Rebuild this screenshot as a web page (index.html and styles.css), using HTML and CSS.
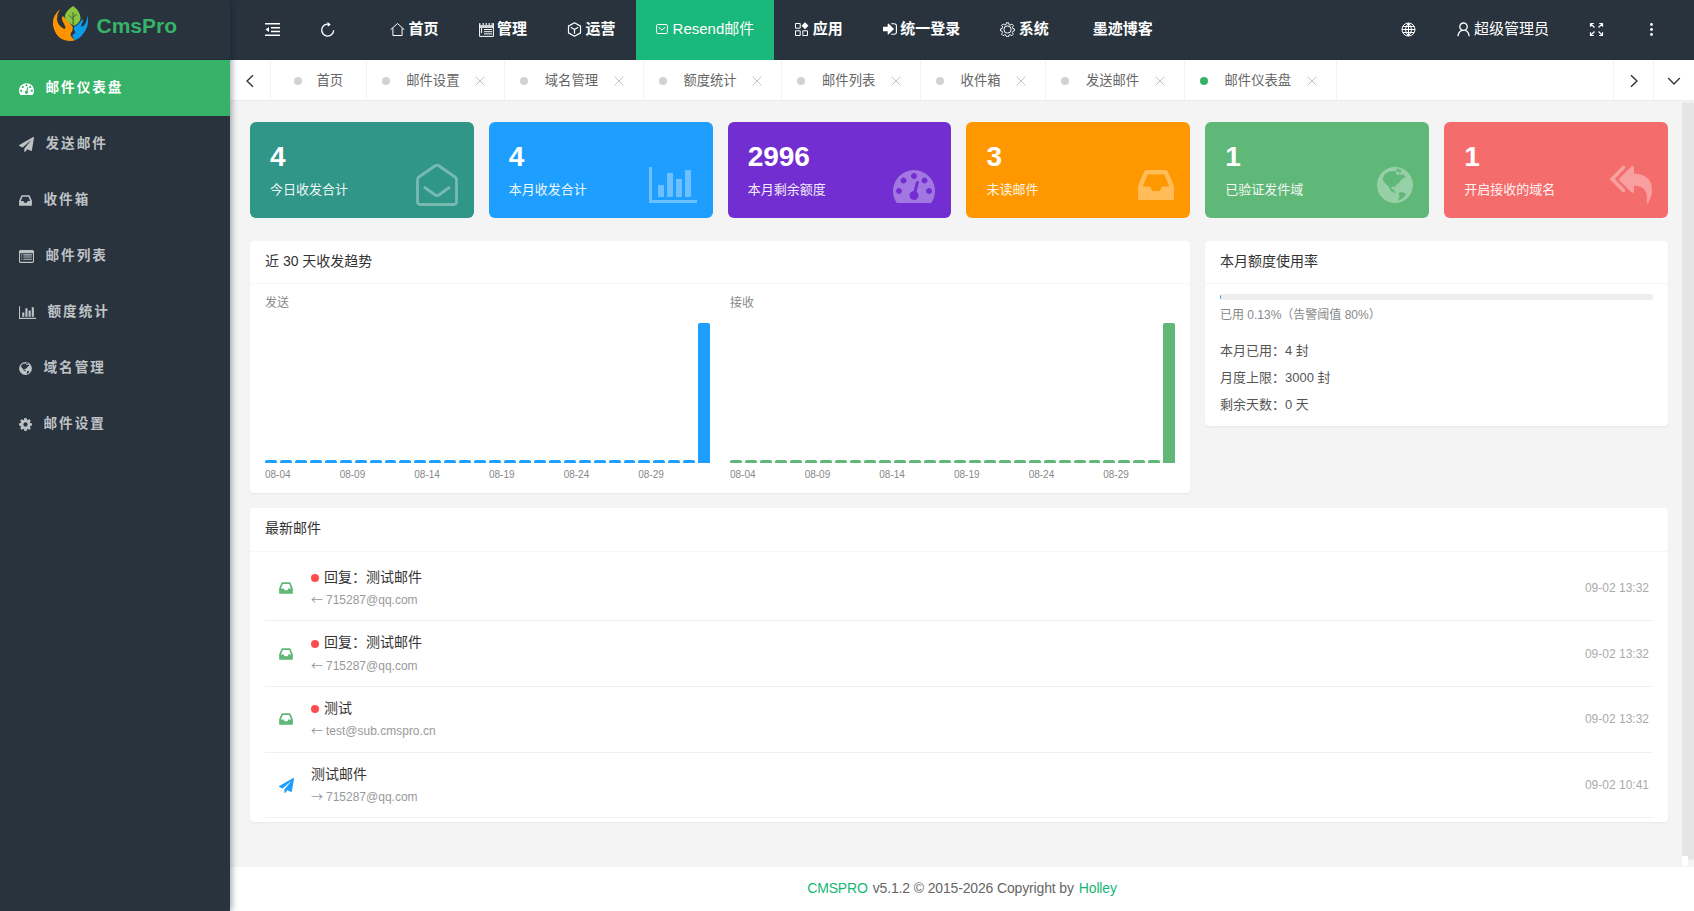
FILE: index.html
```html
<!DOCTYPE html>
<html lang="zh-CN">

<head>
    <meta charset="UTF-8">
    <meta name="viewport" content="width=device-width, initial-scale=1.0">
    <title>邮件仪表盘 - CmsPro</title>
    <link rel="stylesheet" href="styles.css">
</head>

<body>
    <!-- 图标 -->
    <svg class="sprite" xmlns="http://www.w3.org/2000/svg">
        <symbol id="i-gauge" viewBox="0 0 1792 1792"><path d="M384 1152q0-53-37.5-90.5t-90.5-37.5-90.5 37.5-37.5 90.5 37.5 90.5 90.5 37.5 90.5-37.5 37.5-90.5zm192-448q0-53-37.5-90.5t-90.5-37.5-90.5 37.5-37.5 90.5 37.5 90.5 90.5 37.5 90.5-37.5 37.5-90.5zm428 481l101-382q6-26-7.5-48.5t-38.5-29.5-48 6.5-30 39.5l-101 382q-60 5-107 43.5t-63 98.5q-20 77 20 146t117 89 146-20 89-117q16-60-6-117t-72-91zm660-33q0-53-37.5-90.5t-90.5-37.5-90.5 37.5-37.5 90.5 37.5 90.5 90.5 37.5 90.5-37.5 37.5-90.5zm-640-640q0-53-37.5-90.5t-90.5-37.5-90.5 37.5-37.5 90.5 37.5 90.5 90.5 37.5 90.5-37.5 37.5-90.5zm448 192q0-53-37.5-90.5t-90.5-37.5-90.5 37.5-37.5 90.5 37.5 90.5 90.5 37.5 90.5-37.5 37.5-90.5zm320 448q0 261-141 483-19 29-54 29h-1402q-35 0-54-29-141-221-141-483 0-182 71-348t191-286 286-191 348-71 348 71 286 191 191 286 71 348z"/></symbol>
        <symbol id="i-plane" viewBox="0 0 1792 1792"><path d="M1764 11q33 24 27 64l-256 1536q-5 29-32 45-14 8-31 8-11 0-24-5l-453-185-242 295q-18 23-49 23-13 0-22-4-19-7-30.5-23.5t-11.5-36.5v-349l864-1059-1069 925-395-162q-37-14-40-55-2-40 32-59l1664-960q15-9 32-9 20 0 36 11z"/></symbol>
        <symbol id="i-inbox" viewBox="128 0 1536 1792"><path d="M1151 960h316q-1-3-2.5-8.5t-2.5-7.5l-212-496h-708l-212 496q-1 3-2.5 8.5t-2.5 7.5h316l95 192h320zm513 30v482q0 26-19 45t-45 19h-1408q-26 0-45-19t-19-45v-482q0-62 25-123l238-552q10-25 36.5-42t52.5-17h832q26 0 52.5 17t36.5 42l238 552q25 61 25 123z"/></symbol>
        <symbol id="i-list" viewBox="0 0 1792 1792"><path fill-rule="evenodd" d="M160 128h1472q66 0 113 47t47 113v1216q0 66-47 113t-113 47h-1472q-66 0-113-47t-47-113v-1216q0-66 47-113t113-47zM128 512v992q0 32 32 32h1472q32 0 32-32v-992zM256 640h128v128h-128zM512 640h1024v128h-1024zM256 896h128v128h-128zM512 896h1024v128h-1024zM256 1152h128v128h-128zM512 1152h1024v128h-1024z"/></symbol>
        <symbol id="i-chart" viewBox="0 0 2048 1792"><path d="M640 896v512h-256v-512h256zm384-512v1024h-256v-1024h256zm1024 1152v128h-2048v-1536h128v1408h1920zm-640-896v768h-256v-768h256zm384-384v1152h-256v-1152h256z"/></symbol>
        <symbol id="i-earth" viewBox="0 0 36 42"><path fill-rule="evenodd" d="M18 3a18 18 0 1 0 0 36a18 18 0 1 0 0-36zM5.800 14l2-4 4.500-2.500 6-.5 1.500 1.300-1 1.700 2.500 1.500 1.500-2.500 1 2.500 2-1.500 3 3.300-3 1-2 2-1.500 2.500-3.500 2.200-.8 2.300-1.500-1-2.500 1.200 1 2 2-.5.500 2.500 2 1.500-2.500-.3-3.500-2.200-2-4-3-3-2.500-3zM19.500 4.500l5.500 2-1.500 2.200-4-1.700zM21.500 29l3-1 4.500 1.500-1.500 3-4.500 3.500-2 .5 1.500-4z"/></symbol>
        <symbol id="i-cog" viewBox="128 0 1536 1792"><path d="M1152 896q0-106-75-181t-181-75-181 75-75 181 75 181 181 75 181-75 75-181zm512-109v222q0 12-8 23t-20 13l-185 28q-19 54-39 91 35 50 107 138 10 12 10 25t-9 23q-27 37-99 108t-94 71q-12 0-26-9l-138-108q-44 23-91 38-16 136-29 186-7 28-36 28h-222q-14 0-24.500-8.500t-11.500-21.500l-28-184q-49-16-90-37l-141 107q-10 9-25 9-14 0-25-11-126-114-165-168-7-10-7-23 0-12 8-23 15-21 51-66.500t54-70.500q-27-50-41-99l-183-27q-13-2-21-12.500t-8-23.500v-222q0-12 8-23t19-13l186-28q14-46 39-92-40-57-107-138-10-12-10-24 0-10 9-23 26-36 98.500-107.500t94.500-71.500q13 0 26 10l138 107q44-23 91-38 16-136 29-186 7-28 36-28h222q14 0 24.500 8.500t11.500 21.500l28 184q49 16 90 37l142-107q9-9 24-9 13 0 25 10 129 119 165 170 7 8 7 22 0 12-8 23-15 21-51 66.500t-54 70.500q26 50 41 98l183 28q13 2 21 12.500t8 23.500z"/></symbol>
        <symbol id="i-reply" viewBox="0 0 1792 1792"><path d="M640 1082v70q0 42-39 59-13 5-25 5-27 0-45-19l-512-512q-19-19-19-45t19-45l512-512q29-31 70-14 39 17 39 59v69l-397 398q-19 19-19 45t19 45zm1152 58q0 58-17 133.500t-38.500 138-48 125-40.500 90.500l-20 40q-8 17-28 17-6 0-9-1-25-8-23-34 43-400-106-565-64-71-170.500-110.500t-267.500-52.500v251q0 42-39 59-13 5-25 5-27 0-45-19l-512-512q-19-19-19-45t19-45l512-512q29-31 70-14 39 17 39 59v262q411 28 599 221 169 173 169 509z"/></symbol>
        <symbol id="i-signin" viewBox="128 128 1536 1536"><path d="M1312 896q0 26-19 45l-544 544q-19 19-45 19t-45-19-19-45v-288h-448q-26 0-45-19t-19-45v-384q0-26 19-45t45-19h448v-288q0-26 19-45t45-19 45 19l544 544q19 19 19 45zm352-352v704q0 119-84.500 203.500t-203.500 84.500h-352v-128h352q66 0 113-47t47-113v-704q0-66-47-113t-113-47h-352v-128h352q119 0 203.500 84.500t84.500 203.500z"/></symbol>
        <symbol id="i-open" viewBox="0 0 42 42"><path class="line" stroke-width="2.800" d="M1.500 15.500v22.500a2.500 2.500 0 0 0 2.500 2.500h34a2.500 2.500 0 0 0 2.500-2.500v-22.500q0-1.500-1.500-2.500l-16.500-11.500q-1.500-1-3 0l-16.500 11.500q-1.500 1-1.500 2.500zM8 23l10.500 7.500q2.500 1.800 5 0l10.500-7.500"/></symbol>
        <symbol id="i-home" viewBox="0 0 15 15"><path class="line" d="M.7 7.700l6.800-6.200 6.800 6.200M2.900 6.200v7.300h9.200v-7.300"/></symbol>
        <symbol id="i-manage" viewBox="0 0 15 15"><path class="line" d="M.6 2.500v11.900h13.800v-11.900M.6 5.300h13.800M5 7.500h8M5 9.700h8M5 11.900h8M2.600 6v5"/><path d="M0 1h1.500v2h2v-2h1.500v2h1.500v-2h1.500v2h1.500v-2h1.500v2h1.500v-2h2.500v4h-15z" opacity=".75"/></symbol>
        <symbol id="i-cube" viewBox="0 0 15 15"><path class="line" stroke-width="1.200" d="M7.500.8l6 3.300v6.800l-6 3.300-6-3.300v-6.800zM3.800 5.300l3.700 2.100 3.700-2.100M7.500 7.400v4.300"/></symbol>
        <symbol id="i-mail" viewBox="0 0 12 12"><path class="line" d="M1.800 1.500h8.400q1.200 0 1.200 1.200v6.600q0 1.200-1.200 1.200h-8.400q-1.200 0-1.200-1.200v-6.600q0-1.200 1.200-1.200zM2.700 4.300l3.300 2.700 3.300-2.700"/></symbol>
        <symbol id="i-app" viewBox="0 0 15 15"><path class="line" d="M1.500 1.500h4.700v4.700h-4.700zM1.500 8.800h4.700v4.700h-4.700zM8.800 8.800h4.700v4.700h-4.700z"/><path d="M11 .3l3.500 3.500-3.500 3.500-3.500-3.500z"/></symbol>
        <symbol id="i-gear" viewBox="0 0 15 15"><circle class="line" cx="7.500" cy="7.500" r="3.600"/><path class="line" d="M6.400.8h2.200l.4 1.900 1.200.4 1.700-1 1.500 1.500-1 1.700.4 1.200 1.600.4v1.900l-1.600.5-.5 1.200 1 1.700-1.500 1.500-1.700-1-1.200.5-.4 1.600h-2l-.5-1.600-1.200-.5-1.700 1-1.500-1.500 1-1.700-.5-1.200-1.500-.5v-1.900l1.600-.5.500-1.200-1-1.700 1.500-1.500 1.600 1 1.300-.5z"/></symbol>
        <symbol id="i-shrink" viewBox="0 0 15 15"><path d="M0 1h15v1.600h-15zM6 5h9v1.500h-9zM6 8.700h9v1.500h-9zM0 12.400h15v1.600h-15zM4 4.900v5.200l-3.500-2.600z"/></symbol>
        <symbol id="i-refresh" viewBox="0 0 15 15"><path class="line" stroke-width="1.300" d="M9 2.200a6 6 0 1 0 4.700 6"/><path d="M7.400 0l3.400 2.400-3 2.300z"/></symbol>
        <symbol id="i-globe" viewBox="0 0 15 15"><path class="line" d="M7.500 1a6.500 6.500 0 1 0 0 13a6.500 6.500 0 1 0 0-13zM7.500 1q-6 6.500 0 13q6-6.500 0-13zM7.500 1v13M1 7.500h13M2 4.500h11M2 10.500h11"/></symbol>
        <symbol id="i-user" viewBox="0 0 13 15"><path class="line" stroke-width="1.300" d="M6.500 1a3.700 3.700 0 1 0 0 7.400a3.700 3.700 0 1 0 0-7.400zM1 14.300q.3-4.600 3.900-6M8.500 8.300q3.300 1.400 3.600 6"/></symbol>
        <symbol id="i-full" viewBox="0 0 15 15"><path class="line" stroke-width="1.200" d="M1.500 4.800v-3.300h3.300M1.500 1.500l4 4M10.200 1.500h3.300v3.300M13.500 1.500l-4 4M1.500 10.200v3.300h3.300M1.500 13.500l4-4M10.200 13.500h3.300v-3.300M13.500 13.500l-4-4"/></symbol>
        <symbol id="i-more" viewBox="0 0 15 15"><circle cx="7.500" cy="2.500" r="1.400"/><circle cx="7.500" cy="7.500" r="1.400"/><circle cx="7.500" cy="12.500" r="1.400"/></symbol>
        <symbol id="i-close" viewBox="0 0 10 10"><path class="line" d="M.7.700l8.600 8.600M9.300.700l-8.600 8.600"/></symbol>
        <symbol id="i-left" viewBox="0 0 14 14"><path class="line" stroke-width="1.400" d="M10 1.200l-6 5.800 6 5.800"/></symbol>
        <symbol id="i-right" viewBox="0 0 14 14"><path class="line" stroke-width="1.400" d="M4 1.200l6 5.800-6 5.800"/></symbol>
        <symbol id="i-down" viewBox="0 0 14 14"><path class="line" stroke-width="1.300" d="M1.200 4l5.800 6 5.800-6"/></symbol>
    </svg>

    <div class="side">
        <div class="logo">
            <svg viewBox="0 0 34 34">
                <path fill="#ff9200" d="M7 3Q-2 11 .3 20Q3.500 34 17 34Q20 34 21.500 33Q17.500 31 17 27Q20 24 19 20Q15.500 16 11 11Q8 8 9 14L12 20Q12.500 22.500 10.500 22Q5 19 4 14Q3.500 8 7 3z"/>
                <path fill="#0e9be8" d="M33.500 9Q35.500 19 30 26Q26 32 21.500 33Q18.500 31 19 28Q22 27 21.500 25Q19 22 21.500 19.500Q25 18 28 13Q29.500 12 29 15L27 20Q30 20 31.500 17Q33.500 13 33.500 9z"/>
                <path fill="#8bc53f" d="M19.500 0Q26.500 5 26.800 12Q26 17 20 19.500L19 18.500Q12 15 11.500 10Q12 5 19.500 0z"/>
                <path fill="none" stroke="#28333e" stroke-width=".7" d="M19.500 6V19M19.500 11l3.500-3M19.500 13l-4-4"/>
            </svg>
            <b>CmsPro</b>
        </div>
        <ul class="menu">
            <li class="on"><svg class="w15"><use href="#i-gauge"/></svg>邮件仪表盘</li>
            <li><svg class="w15"><use href="#i-plane"/></svg>发送邮件</li>
            <li><svg class="w13"><use href="#i-inbox"/></svg>收件箱</li>
            <li><svg class="w15"><use href="#i-list"/></svg>邮件列表</li>
            <li><svg class="w17"><use href="#i-chart"/></svg>额度统计</li>
            <li><svg class="w13"><use href="#i-earth"/></svg>域名管理</li>
            <li><svg class="w13"><use href="#i-cog"/></svg>邮件设置</li>
        </ul>
    </div>

    <div class="main">
        <div class="header">
            <ul class="tools">
                <li><svg><use href="#i-shrink"/></svg></li>
                <li><svg><use href="#i-refresh"/></svg></li>
            </ul>
            <ul class="nav">
                <li><svg><use href="#i-home"/></svg>首页</li>
                <li><svg><use href="#i-manage"/></svg>管理</li>
                <li><svg><use href="#i-cube"/></svg>运营</li>
                <li class="on"><svg class="small"><use href="#i-mail"/></svg>Resend邮件</li>
                <li><svg><use href="#i-app"/></svg>应用</li>
                <li><svg class="w13"><use href="#i-signin"/></svg>统一登录</li>
                <li><svg><use href="#i-gear"/></svg>系统</li>
                <li class="noicon">墨迹博客</li>
            </ul>
            <ul class="tools right">
                <li class="lang"><svg><use href="#i-globe"/></svg></li>
                <li class="user"><svg><use href="#i-user"/></svg>超级管理员</li>
                <li><svg><use href="#i-full"/></svg></li>
                <li><svg><use href="#i-more"/></svg></li>
            </ul>
        </div>

        <div class="tabs">
            <span class="ctrl"><svg><use href="#i-left"/></svg></span>
            <ul>
                <li class="home"><i></i>首页</li>
                <li><i></i>邮件设置<svg><use href="#i-close"/></svg></li>
                <li><i></i>域名管理<svg><use href="#i-close"/></svg></li>
                <li><i></i>额度统计<svg><use href="#i-close"/></svg></li>
                <li><i></i>邮件列表<svg><use href="#i-close"/></svg></li>
                <li><i></i>收件箱<svg><use href="#i-close"/></svg></li>
                <li><i></i>发送邮件<svg><use href="#i-close"/></svg></li>
                <li class="on"><i></i>邮件仪表盘<svg><use href="#i-close"/></svg></li>
            </ul>
            <span class="ctrl"><svg><use href="#i-right"/></svg></span>
            <span class="ctrl"><svg><use href="#i-down"/></svg></span>
        </div>

        <div class="content">
            <div class="stats">
                <div class="stat teal"><b>4</b><p>今日收发合计</p><svg><use href="#i-open"/></svg></div>
                <div class="stat blue"><b>4</b><p>本月收发合计</p><svg class="wide"><use href="#i-chart"/></svg></div>
                <div class="stat purple"><b>2996</b><p>本月剩余额度</p><svg><use href="#i-gauge"/></svg></div>
                <div class="stat orange"><b>3</b><p>未读邮件</p><svg class="narrow"><use href="#i-inbox"/></svg></div>
                <div class="stat green"><b>1</b><p>已验证发件域</p><svg class="narrow"><use href="#i-earth"/></svg></div>
                <div class="stat red"><b>1</b><p>开启接收的域名</p><svg><use href="#i-reply"/></svg></div>
            </div>

            <div class="row">
                <div class="card trend">
                    <h3>近 30 天收发趋势</h3>
                    <div class="charts">
                        <div class="chart">
                            <p>发送</p>
                            <div class="bars send"></div>
                            <div class="days"><span>08-04</span><span>08-09</span><span>08-14</span><span>08-19</span><span>08-24</span><span>08-29</span></div>
                        </div>
                        <div class="chart">
                            <p>接收</p>
                            <div class="bars receive"></div>
                            <div class="days"><span>08-04</span><span>08-09</span><span>08-14</span><span>08-19</span><span>08-24</span><span>08-29</span></div>
                        </div>
                    </div>
                </div>
                <div class="card quota">
                    <h3>本月额度使用率</h3>
                    <div class="body">
                        <div class="progress"><div style="width: 0.13%"></div></div>
                        <p class="tip">已用 0.13%（告警阈值 80%）</p>
                        <p>本月已用：4 封</p>
                        <p>月度上限：3000 封</p>
                        <p>剩余天数：0 天</p>
                    </div>
                </div>
            </div>

            <div class="card latest">
                <h3>最新邮件</h3>
                <ul class="mails">
                    <li>
                        <svg class="in"><use href="#i-inbox"/></svg>
                        <div><p><i></i>回复：测试邮件</p><small><em>←</em>715287@qq.com</small></div>
                        <span>09-02 13:32</span>
                    </li>
                    <li>
                        <svg class="in"><use href="#i-inbox"/></svg>
                        <div><p><i></i>回复：测试邮件</p><small><em>←</em>715287@qq.com</small></div>
                        <span>09-02 13:32</span>
                    </li>
                    <li>
                        <svg class="in"><use href="#i-inbox"/></svg>
                        <div><p><i></i>测试</p><small><em>←</em>test@sub.cmspro.cn</small></div>
                        <span>09-02 13:32</span>
                    </li>
                    <li>
                        <svg class="out"><use href="#i-plane"/></svg>
                        <div><p>测试邮件</p><small><em>→</em>715287@qq.com</small></div>
                        <span>09-02 10:41</span>
                    </li>
                </ul>
            </div>
            <div class="scroll inner"></div>
            <div class="scroll outer"></div>
        </div>

        <div class="footer"><a>CMSPRO</a>v5.1.2 © 2015-2026 Copyright by<a>Holley</a></div>
    </div>

    <script>
        // 近 30 天，只有最后一天有数据
        function drawBars(selector, total) {
            let box = document.querySelector(selector)
            for (let i = 0; i < 30; i++) {
                let bar = document.createElement('span')
                let count = i === 29 ? total : 0
                bar.style.height = Math.max(3, count / total * 140) + 'px'
                box.appendChild(bar)
            }
        }
        drawBars('.send', 1)
        drawBars('.receive', 3)
    </script>
</body>

</html>
```

FILE: styles.css
```css
* {
    padding: 0;
    margin: 0;
    box-sizing: border-box;
}

body {
    display: flex;
    height: 911px;
    overflow: hidden;
    font: 14px/24px "Liberation Sans", "Noto Sans CJK SC", sans-serif;
    color: #333;
    background-color: #f4f4f4;
}

li {
    list-style: none;
}

svg {
    display: block;
    flex: none;
    fill: currentColor;
}

.line {
    fill: none;
    stroke: currentColor;
    stroke-linejoin: round;
}

.sprite {
    position: absolute;
    width: 0;
    height: 0;
}

/* 侧边栏 */

.side {
    flex: none;
    width: 230px;
    background-color: #28333e;
    box-shadow: 2px 0 6px rgba(0, 21, 41, .35);
    position: relative;
    z-index: 2;
}

.logo {
    display: flex;
    gap: 8.500px;
    height: 60px;
    padding: 6px 0 0 53px;
    border-bottom: 1px solid #202a33;
}

.logo svg {
    width: 35px;
    height: 35px;
}

.logo b {
    font-size: 21px;
    line-height: 39px;
    color: #36b368;
}

.menu li {
    display: flex;
    align-items: center;
    gap: 11.500px;
    height: 56px;
    padding-left: 19px;
    font-size: 13.600px;
    font-weight: bold;
    letter-spacing: 2px;
    color: #bfc2c5;
}

.menu svg {
    height: 15px;
    margin-top: 1px;
}

.menu .on {
    color: #fff;
    background-color: #36b368;
}

.w13 {
    width: 13px;
}

.w15 {
    width: 15px;
}

.w17 {
    width: 17px;
}

/* 顶部 */

.main {
    flex: 1;
    min-width: 0;
    display: flex;
    flex-direction: column;
}

.header {
    display: flex;
    flex: none;
    height: 60px;
    padding: 0 15px;
    font-size: 15px;
    line-height: 58px;
    color: #fff;
    background-color: #28333e;
}

.header ul {
    display: flex;
}

.header li {
    display: flex;
    align-items: center;
    gap: 4px;
    padding: 0 20px 2px;
}

.header svg {
    width: 15px;
    height: 15px;
}

.nav {
    margin-left: 15px;
    font-weight: bold;
}

.header .nav li {
    gap: 3.500px;
}

.header .w13 {
    width: 14px;
    height: 14px;
}

.nav .small {
    width: 12px;
    height: 12px;
    margin-right: 1.500px;
}

.nav .on {
    font-weight: normal;
    background-color: #1ab87a;
}

.nav .noicon {
    padding-left: 24px;
}

.header .right {
    margin-left: auto;
}

.lang {
    margin-right: 1px;
}

.user svg {
    width: 13px;
}

/* 标签页 */

.tabs {
    display: flex;
    flex: none;
    height: 41px;
    background-color: #fff;
    border-bottom: 1px solid #ececec;
}

.tabs ul {
    display: flex;
    flex: 1;
    border-left: 1px solid #f3f3f3;
}

.tabs li {
    display: flex;
    align-items: center;
    padding: 1px 19px 0 15px;
    font-size: 13.330px;
    color: #666;
    border-right: 1px solid #f3f3f3;
}

.tabs li i {
    width: 8px;
    height: 8px;
    margin-right: 16.500px;
    border-radius: 50%;
    background-color: #d2d2d2;
}

.tabs .on i {
    background-color: #36b368;
}

.tabs li svg {
    width: 10px;
    height: 10px;
    margin-left: 15.800px;
    color: #c2c2c2;
}

.tabs .home {
    padding: 1px 22.500px 0;
}

.tabs .home i {
    margin-right: 15px;
}

.ctrl {
    display: flex;
    align-items: center;
    justify-content: center;
    width: 40px;
    color: #333;
}

.ctrl svg {
    width: 14px;
    height: 14px;
    margin-top: 1px;
}

ul ~ .ctrl {
    border-left: 1px solid #f3f3f3;
}

.ctrl:last-child {
    width: 41px;
}

/* 内容 */

.content {
    flex: 1;
    padding: 21px 26px 0 20px;
    position: relative;
}

.stats {
    display: grid;
    grid-template-columns: repeat(6, 1fr);
    gap: 15px;
    margin-bottom: 23px;
}

.stat {
    height: 96px;
    padding: 18px 20px;
    border-radius: 6px;
    color: #fff;
    position: relative;
}

.stat b {
    display: block;
    font-size: 28px;
    line-height: 34px;
}

.stat p {
    margin-top: 4px;
    font-size: 13px;
    opacity: .92;
}

/* 卡片右下角的大图标 */
.stat svg {
    position: absolute;
    right: 16px;
    bottom: 12px;
    width: 42px;
    height: 42px;
    opacity: .35;
}

.stat .wide {
    width: 48px;
}

.stat .narrow {
    width: 36px;
}

.teal {
    background-color: #2f9688;
}

.blue {
    background-color: #1e9fff;
}

.purple {
    background-color: #722ed1;
}

.orange {
    background-color: #ff9800;
}

.green {
    background-color: #5fb878;
}

.red {
    background-color: #f56c6c;
}

.row {
    display: flex;
    align-items: flex-start;
    gap: 15px;
    margin-bottom: 15px;
}

.card {
    background-color: #fff;
    border-radius: 4px;
    box-shadow: 0 1px 2px rgba(0, 0, 0, .05);
}

h3 {
    height: 43px;
    padding: 0 15px;
    font-size: 14px;
    font-weight: normal;
    line-height: 41px;
    border-bottom: 1px solid #f6f6f6;
}

.trend {
    width: 940px;
    height: 252px;
}

.charts {
    display: grid;
    grid-template-columns: 1fr 1fr;
    gap: 20px;
    padding: 8px 15px 0;
}

.chart {
    min-width: 0;
}

.chart p {
    height: 31px;
    font-size: 12px;
    line-height: 22px;
    color: #888;
}

.bars {
    display: flex;
    align-items: flex-end;
    gap: 3px;
    height: 140px;
}

.bars span {
    flex: 1;
    border-radius: 2px 2px 0 0;
}

.send span {
    background-color: #1e9fff;
}

.receive span {
    background-color: #5fb878;
}

.days {
    display: flex;
    font-size: 10px;
    line-height: 24px;
    color: #888;
}

.days span {
    flex: none;
    width: 74.660px;
}

.quota {
    flex: 1;
    height: 185px;
}

.quota .body {
    padding: 10px 15px;
}

.progress {
    height: 6px;
    border-radius: 3px;
    background-color: #eee;
    overflow: hidden;
}

.progress div {
    min-width: 1px;
    height: 6px;
    background-color: #1e9fff;
}

.quota p {
    font-size: 13px;
    line-height: 27px;
    color: #555;
}

.quota .tip {
    margin: 5px 0 12px;
    font-size: 12px;
    line-height: 20px;
    color: #888;
}

/* 最新邮件 */

.latest h3 {
    height: 44px;
}

.mails {
    padding: 3.800px 15px 4px;
}

.mails li {
    display: flex;
    align-items: center;
    height: 65.660px;
    padding: 0 4px 0 14px;
    border-bottom: 1px solid #f0f0f0;
}

.mails svg {
    width: 14px;
    height: 16px;
    margin-right: 18px;
}

.mails .out {
    width: 15px;
    height: 15px;
    margin-right: 17px;
}

.in {
    color: #5fb878;
}

.out {
    color: #1e9fff;
}

.mails p {
    display: flex;
    align-items: center;
    height: 23px;
}

.mails p i {
    width: 8px;
    height: 8px;
    margin: 3px 5px 0 0;
    border-radius: 50%;
    background-color: #ff4d4f;
}

.mails small {
    display: flex;
    margin-top: 1px;
    font-size: 12px;
    line-height: 22px;
    color: #999;
}

.mails em {
    width: 15px;
    font-family: "Noto Sans CJK SC", sans-serif;
    font-style: normal;
}

.mails li > span {
    margin-left: auto;
    font-size: 12px;
    color: #aaa;
}

/* 滚动条 */
.scroll {
    position: absolute;
    top: 1px;
    right: 0;
    width: 6px;
    height: 758px;
    border-radius: 3px;
    background-color: #e5e5e5;
}

.inner {
    right: 6px;
    height: 764px;
    background: linear-gradient(#e5e5e5 754px, #fff 754px);
}

.footer {
    display: flex;
    flex: none;
    gap: 5px;
    justify-content: center;
    height: 44px;
    line-height: 42px;
    letter-spacing: -.150px;
    color: #666;
    background-color: #fff;
}

.footer a {
    color: #16b777;
}
```
